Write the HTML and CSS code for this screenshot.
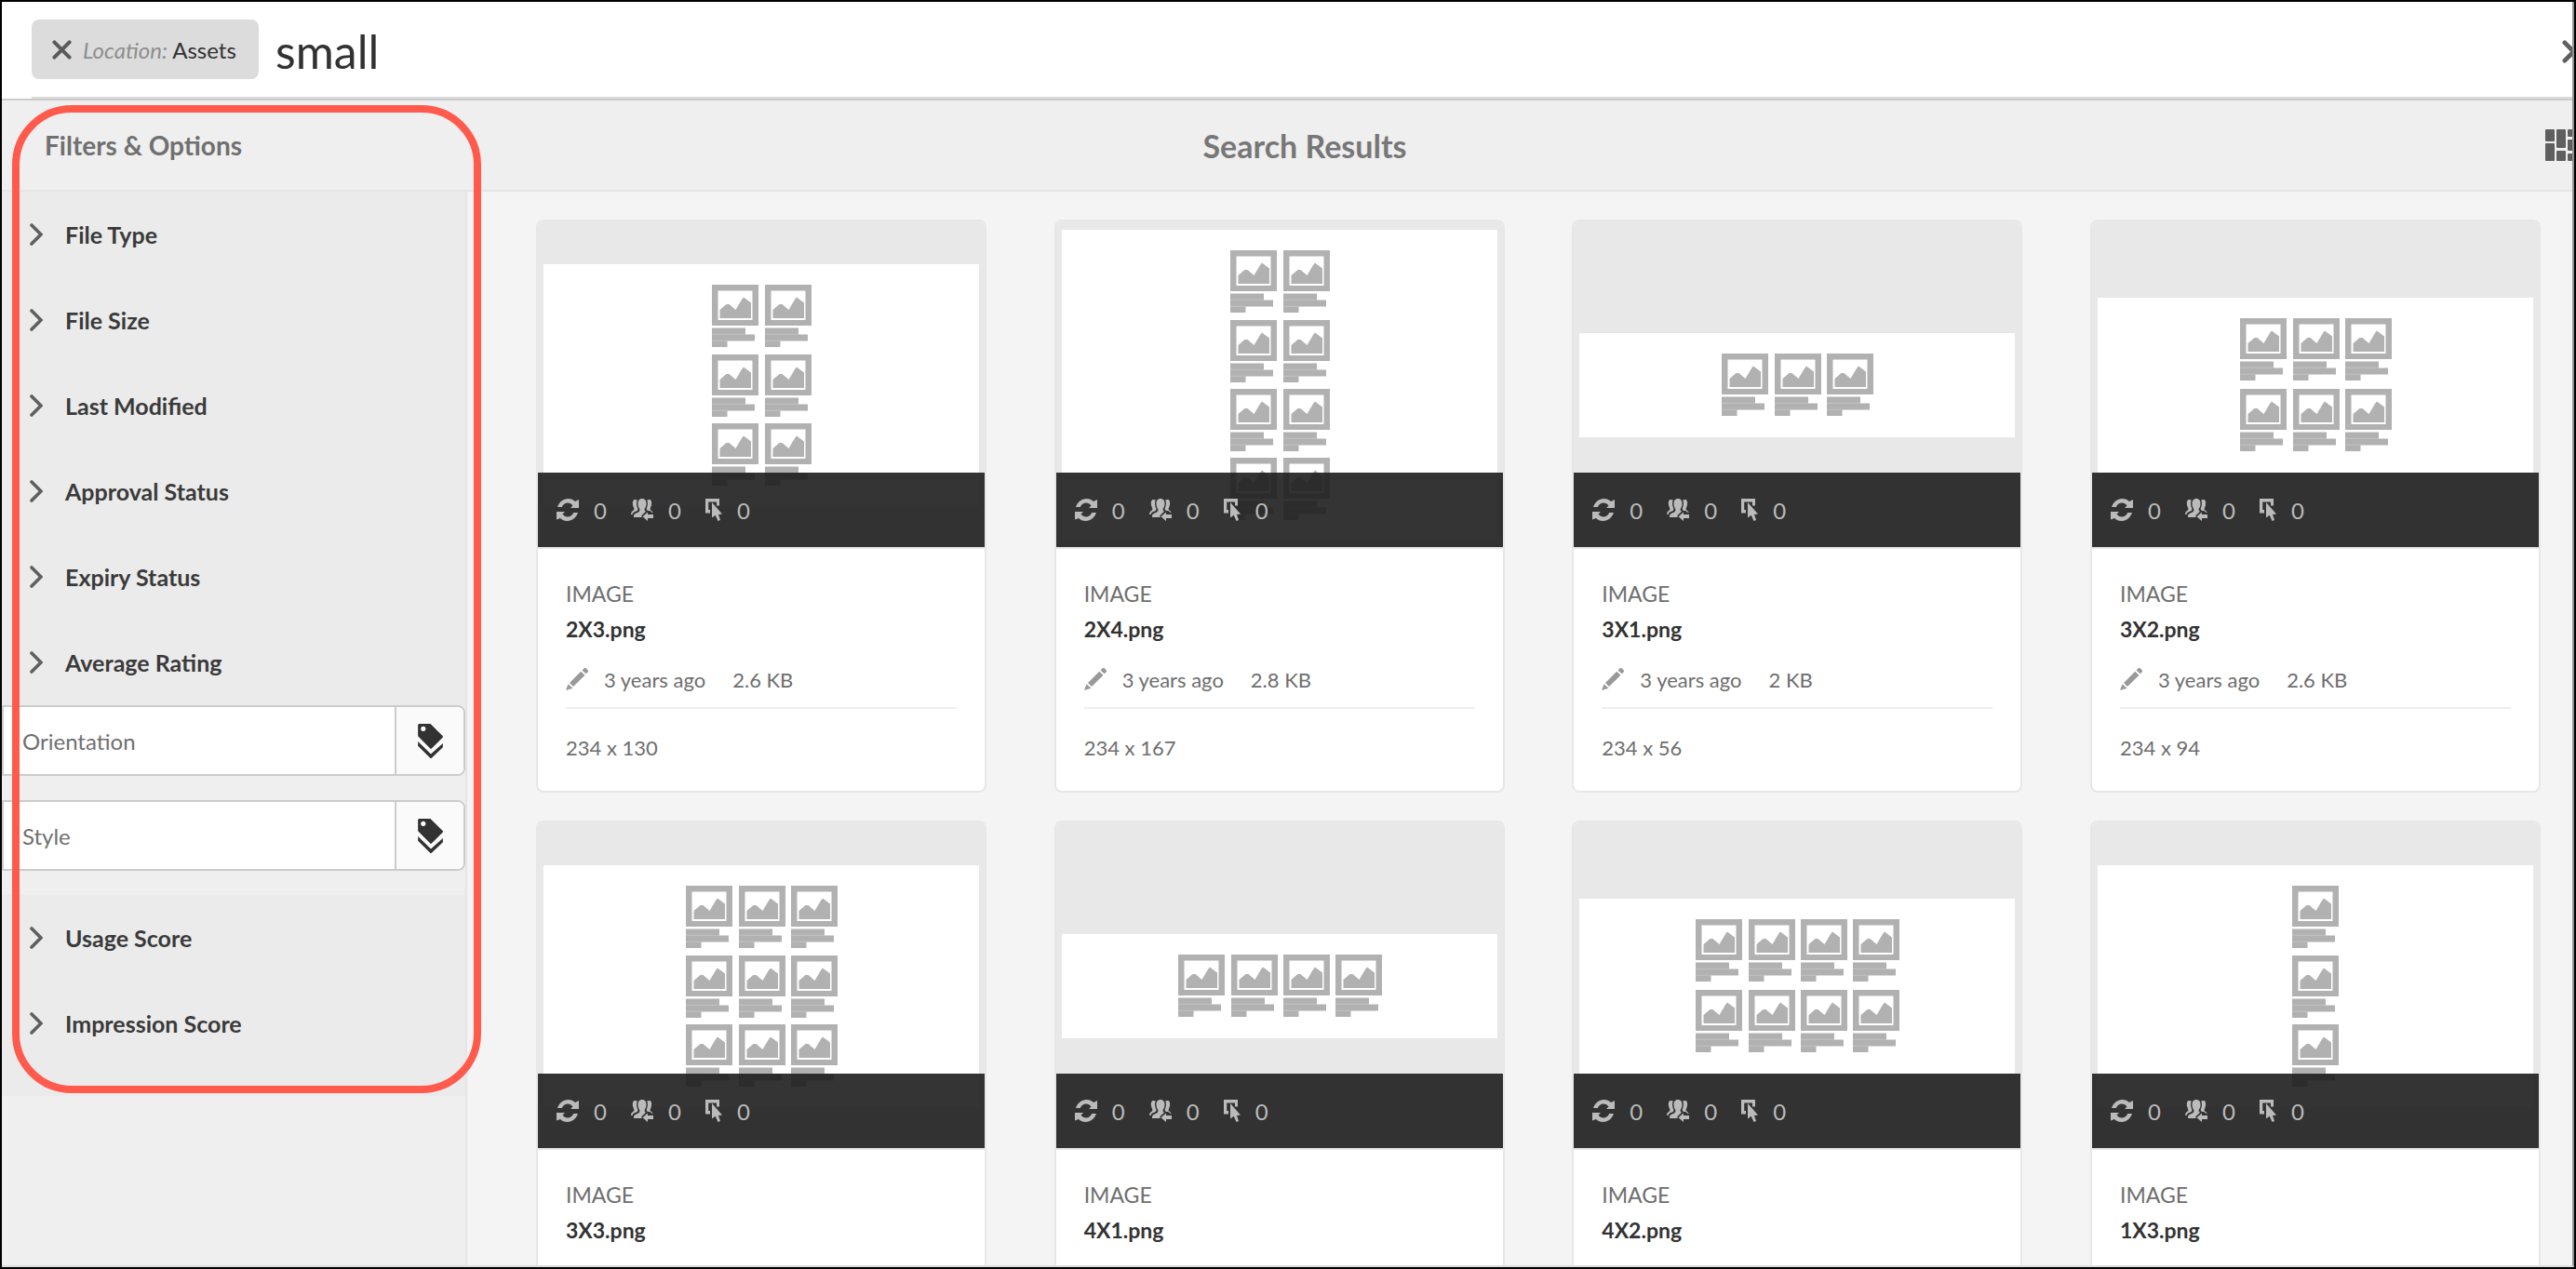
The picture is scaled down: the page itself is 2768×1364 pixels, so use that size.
FILE: index.html
```html
<!DOCTYPE html>
<html lang="en">
<head>
<meta charset="utf-8">
<title>Search Results</title>
<link rel="stylesheet" href="styles.css">
</head>
<body>
<svg class="sprite" aria-hidden="true">
  <defs>
    <symbol id="i-chevron" viewBox="0 0 14 24"><path d="M2 2l10 10L2 22" fill="none" stroke="currentColor" stroke-width="3.6" stroke-linecap="round"/></symbol>
    <symbol id="i-close" viewBox="0 0 26 26"><path d="M3 3l20 20M23 3L3 23" fill="none" stroke="currentColor" stroke-width="5" stroke-linecap="round"/></symbol>
    <symbol id="i-tags" viewBox="0 0 26 36"><path fill="currentColor" fill-rule="evenodd" d="M1 0h12l13 13v1L14 26h-1L0 13V1zM5.500 2.700a2.600 2.600 0 1 0 .01 0zM0 18.500L13.500 31.500 26 20.500v4L14 36h-1L0 23z"/></symbol>
    <symbol id="i-refresh" viewBox="0 0 24 24"><path fill="currentColor" d="M1 9C3 3.500 7 0 12.500 0c3 0 5.500 1.200 7.500 3l4-2v9h-9l2.500-2.500C16 5.500 14.500 4.500 12 4.500c-2.800 0-5 1.700-6.200 4.500zM23 15c-2 5.500-6 9-11.500 9-3 0-5.500-1.200-7.500-3l-4 1.500V14h9l-2.500 2.500c1.500 2 3.200 3 5.500 3 2.800 0 5-1.700 6.200-4.500z"/></symbol>
    <symbol id="i-people" viewBox="0 0 24 24"><path fill="currentColor" d="M12 0c3.200 0 4.500 2.300 4.500 5.500 0 2.500-.8 4-1.800 5.300-.3 1.500.1 2.400 1.300 2.900l-4.500 4.300V20H3v-1.300c0-1.700 1-2.700 3.200-3.500 2-.8 3.300-1.300 3.200-4C8.300 9.800 7.500 8 7.500 5.500 7.500 2.300 8.800 0 12 0zM3.500 1C5 .8 6 1.200 6.800 1.500 5.600 4 5.800 7.500 7.300 10.500 7.700 12.500 7 13 5 13.800 3 14.500 2 15.300 1.500 17H0c0-2.500 1-3.500 3-4.800C4 11.300 3 10 2.300 8 1.600 5.500 1.500 2 3.500 1zM20.500 1c-1.500-.2-2.500.2-3.300.5 1.200 2.500 1 6-.5 9 0 1.300.3 2 1.500 2.500h2l3.300 2.500c0-1.800-1.300-2.500-2.500-3.300-1-.9 0-2.200.7-4.200.7-2.500.8-6-1.200-7zM18 14.500V17h6v4h-6v3l-5.500-4.800z"/></symbol>
    <symbol id="i-click" viewBox="0 0 18 24"><path fill="currentColor" d="M0 0h15v7.500h-3V3.500H3.200v8.500H5v3.500H0zM7 4l11 12.500-4 .5 2 6-2.500 1-2.800-6.300L7 20.500z"/></symbol>
    <symbol id="i-pencil" viewBox="0 0 24 24"><path fill="currentColor" d="M0 24l2.500-6.800 5 4.500zM4 16L16.200 3.800l4.300 4L8 20zM17.500 2.500L20 0h1.500L24 2.800V4l-2.300 2.300z"/></symbol>
    <symbol id="i-masonry" viewBox="0 0 36 34"><g fill="currentColor"><rect width="10" height="13" rx="1"/><rect y="15" width="10" height="19" rx="1"/><rect x="12" width="10" height="20" rx="1"/><rect x="12" y="23" width="10" height="11" rx="1"/><rect x="24" width="10" height="8" rx="1"/><rect x="24" y="11" width="10" height="12" rx="1"/><rect x="24" y="26" width="10" height="8" rx="1"/></g></symbol>

    <g id="tile" fill="#b1b1b1">
      <path fill-rule="evenodd" d="M0 0H50V44H0zM6.500 6.500V38H43.500V6.500z"/>
      <path d="M8.500 27l7-6h3l7 6 6.500-11 2-2.500 8 6V36H8.500z"/>
      <path d="M0 46.500h36v7h10v7H16.500V67H0z"/>
      <path fill="#c4c4c4" d="M0 52.700h36v1H0zM0 59.700h17v1H0z"/>
    </g>
    <g id="row2"><use href="#tile" x="181"/><use href="#tile" x="238"/></g>
    <g id="row3"><use href="#tile" x="153"/><use href="#tile" x="210"/><use href="#tile" x="266"/></g>
    <g id="row4"><use href="#tile" x="125"/><use href="#tile" x="182"/><use href="#tile" x="238"/><use href="#tile" x="294"/></g>
  </defs>
</svg>

<div class="app">
  <header class="search">
    <div class="search-row">
      <button class="chip" type="button"><svg class="chip-icon"><use href="#i-close"/></svg><span><em>Location:</em> Assets</span></button>
      <input class="query" type="text" value="small" aria-label="Search">
      <button class="close" type="button" aria-label="Close search"><svg class="close-icon"><use href="#i-close"/></svg></button>
    </div>
  </header>

  <div class="titlebar">
    <h2 class="rail-title">Filters &amp; Options</h2>
    <h1 class="page-title">Search Results</h1>
    <button class="view" type="button" aria-label="Card view"><svg class="view-icon"><use href="#i-masonry"/></svg></button>
  </div>

  <div class="columns">
    <aside class="rail">
      <div class="group">
        <button class="filter" type="button"><svg class="chevron"><use href="#i-chevron"/></svg>File Type</button>
        <button class="filter" type="button"><svg class="chevron"><use href="#i-chevron"/></svg>File Size</button>
        <button class="filter" type="button"><svg class="chevron"><use href="#i-chevron"/></svg>Last Modified</button>
        <button class="filter" type="button"><svg class="chevron"><use href="#i-chevron"/></svg>Approval Status</button>
        <button class="filter" type="button"><svg class="chevron"><use href="#i-chevron"/></svg>Expiry Status</button>
        <button class="filter" type="button"><svg class="chevron"><use href="#i-chevron"/></svg>Average Rating</button>
      </div>
      <div class="fields">
        <div class="field"><input class="tag-input" type="text" placeholder="Orientation" aria-label="Orientation"><button class="tag-button" type="button" aria-label="Choose orientation"><svg class="tags"><use href="#i-tags"/></svg></button></div>
        <div class="field"><input class="tag-input" type="text" placeholder="Style" aria-label="Style"><button class="tag-button" type="button" aria-label="Choose style"><svg class="tags"><use href="#i-tags"/></svg></button></div>
      </div>
      <div class="group group-last">
        <button class="filter" type="button"><svg class="chevron"><use href="#i-chevron"/></svg>Usage Score</button>
        <button class="filter" type="button"><svg class="chevron"><use href="#i-chevron"/></svg>Impression Score</button>
      </div>
    </aside>

    <main class="results">
      <article class="card">
        <div class="preview">
          <svg class="thumb" viewBox="0 0 468 260"><use href="#row2" y="22"/><use href="#row2" y="97"/><use href="#row2" y="171"/></svg>
          <div class="stats"><svg class="stat"><use href="#i-refresh"/></svg><span>0</span><svg class="stat"><use href="#i-people"/></svg><span>0</span><svg class="stat stat-click"><use href="#i-click"/></svg><span>0</span></div>
        </div>
        <div class="info"><p class="kind">IMAGE</p><h3 class="name">2X3.png</h3><p class="meta"><svg class="pencil"><use href="#i-pencil"/></svg><span class="age">3 years ago</span><span>2.6 KB</span></p><p class="dims">234 x 130</p></div>
      </article>
      <article class="card">
        <div class="preview">
          <svg class="thumb" viewBox="0 0 468 334"><use href="#row2" y="22"/><use href="#row2" y="97"/><use href="#row2" y="171"/><use href="#row2" y="245"/></svg>
          <div class="stats"><svg class="stat"><use href="#i-refresh"/></svg><span>0</span><svg class="stat"><use href="#i-people"/></svg><span>0</span><svg class="stat stat-click"><use href="#i-click"/></svg><span>0</span></div>
        </div>
        <div class="info"><p class="kind">IMAGE</p><h3 class="name">2X4.png</h3><p class="meta"><svg class="pencil"><use href="#i-pencil"/></svg><span class="age">3 years ago</span><span>2.8 KB</span></p><p class="dims">234 x 167</p></div>
      </article>
      <article class="card">
        <div class="preview">
          <svg class="thumb" viewBox="0 0 468 112"><use href="#row3" y="22"/></svg>
          <div class="stats"><svg class="stat"><use href="#i-refresh"/></svg><span>0</span><svg class="stat"><use href="#i-people"/></svg><span>0</span><svg class="stat stat-click"><use href="#i-click"/></svg><span>0</span></div>
        </div>
        <div class="info"><p class="kind">IMAGE</p><h3 class="name">3X1.png</h3><p class="meta"><svg class="pencil"><use href="#i-pencil"/></svg><span class="age">3 years ago</span><span>2 KB</span></p><p class="dims">234 x 56</p></div>
      </article>
      <article class="card">
        <div class="preview">
          <svg class="thumb" viewBox="0 0 468 188"><use href="#row3" y="22"/><use href="#row3" y="98"/></svg>
          <div class="stats"><svg class="stat"><use href="#i-refresh"/></svg><span>0</span><svg class="stat"><use href="#i-people"/></svg><span>0</span><svg class="stat stat-click"><use href="#i-click"/></svg><span>0</span></div>
        </div>
        <div class="info"><p class="kind">IMAGE</p><h3 class="name">3X2.png</h3><p class="meta"><svg class="pencil"><use href="#i-pencil"/></svg><span class="age">3 years ago</span><span>2.6 KB</span></p><p class="dims">234 x 94</p></div>
      </article>
      <article class="card">
        <div class="preview">
          <svg class="thumb" viewBox="0 0 468 260"><use href="#row3" y="22"/><use href="#row3" y="97"/><use href="#row3" y="171"/></svg>
          <div class="stats"><svg class="stat"><use href="#i-refresh"/></svg><span>0</span><svg class="stat"><use href="#i-people"/></svg><span>0</span><svg class="stat stat-click"><use href="#i-click"/></svg><span>0</span></div>
        </div>
        <div class="info"><p class="kind">IMAGE</p><h3 class="name">3X3.png</h3></div>
      </article>
      <article class="card">
        <div class="preview">
          <svg class="thumb" viewBox="0 0 468 112"><use href="#row4" y="22"/></svg>
          <div class="stats"><svg class="stat"><use href="#i-refresh"/></svg><span>0</span><svg class="stat"><use href="#i-people"/></svg><span>0</span><svg class="stat stat-click"><use href="#i-click"/></svg><span>0</span></div>
        </div>
        <div class="info"><p class="kind">IMAGE</p><h3 class="name">4X1.png</h3></div>
      </article>
      <article class="card">
        <div class="preview">
          <svg class="thumb" viewBox="0 0 468 188"><use href="#row4" y="22"/><use href="#row4" y="98"/></svg>
          <div class="stats"><svg class="stat"><use href="#i-refresh"/></svg><span>0</span><svg class="stat"><use href="#i-people"/></svg><span>0</span><svg class="stat stat-click"><use href="#i-click"/></svg><span>0</span></div>
        </div>
        <div class="info"><p class="kind">IMAGE</p><h3 class="name">4X2.png</h3></div>
      </article>
      <article class="card">
        <div class="preview">
          <svg class="thumb" viewBox="0 0 468 260"><use href="#tile" x="209" y="22"/><use href="#tile" x="209" y="97"/><use href="#tile" x="209" y="171"/></svg>
          <div class="stats"><svg class="stat"><use href="#i-refresh"/></svg><span>0</span><svg class="stat"><use href="#i-people"/></svg><span>0</span><svg class="stat stat-click"><use href="#i-click"/></svg><span>0</span></div>
        </div>
        <div class="info"><p class="kind">IMAGE</p><h3 class="name">1X3.png</h3></div>
      </article>
    </main>
  </div>
  <div class="callout"></div>
</div>
</body>
</html>
```
FILE: styles.css
```css
* { box-sizing: border-box; }

body {
  margin: 0;
  border: 2px solid #000;
  height: 100vh;
  overflow: hidden;
  font-family: Lato, "Open Sans", sans-serif;
  font-size: 24px;
  color: #323232;
}

button, input { font: inherit; color: inherit; }
button { border: 0; padding: 0; background: none; cursor: pointer; }
h1, h2, h3, p { margin: 0; }
svg { display: block; flex: none; }
.sprite { position: absolute; width: 0; height: 0; }

.app {
  position: relative;
  height: 100%;
  display: flex;
  flex-direction: column;
  border-right: 2px solid #92928e;
  border-bottom: 2px solid #ddd;
  background: #f4f4f4;
  overflow: hidden;
}

/* Search header */
.search {
  flex: none;
  background: #fff;
  border-bottom: 2px solid #cbcbcb;
  padding-left: 32px;
  overflow: hidden;
}
.search-row {
  display: flex;
  align-items: center;
  height: 104px;
  border-bottom: 2px solid #dcdcdc;
}
.chip {
  display: flex;
  align-items: center;
  gap: 12px;
  width: 244px;
  height: 64px;
  padding-left: 22px;
  border-radius: 8px;
  background: #dcdcdc;
  white-space: nowrap;
}
.chip em { color: #8e8e8e; }
.chip-icon { width: 21px; height: 21px; color: #5a5a5a; }
.query {
  flex: 1;
  min-width: 0;
  border: 0;
  outline: 0;
  padding: 4px 0 0 18px;
  background: none;
  font-size: 50px;
  line-height: 56px;
}
.close { margin: 4px -14px 0 0; color: #5f5f5f; }
.close-icon { width: 25px; height: 25px; }

/* Title bar */
.titlebar {
  flex: none;
  display: grid;
  grid-template-columns: 1fr auto 1fr;
  align-items: center;
  height: 98px;
  padding: 0 8px 0 46px;
  background: #efefef;
  border-bottom: 2px solid #e5e5e5;
  color: #777;
}
.rail-title { font-size: 28px; font-weight: 700; color: #707070; }
.page-title { font-size: 34px; font-weight: 700; }
.view { justify-self: end; margin-right: -15px; color: #5f5f5f; }
.view-icon { width: 36px; height: 34px; }

.columns { flex: 1; min-height: 0; display: flex; }

/* Filter rail */
.rail {
  flex: none;
  width: 500px;
  background: #efefef;
  border-right: 2px solid #e5e5e5;
}
.group { background: #ebebeb; }
.group-last { padding-bottom: 32px; }
.filter {
  display: flex;
  align-items: center;
  gap: 24px;
  width: 100%;
  height: 92px;
  padding-left: 30px;
  font-size: 25px;
  font-weight: 700;
  color: #3a3a3a;
}
.chevron { width: 14px; height: 24px; color: #5f5f5f; }
.fields { display: grid; gap: 26px; padding-bottom: 26px; }
.field {
  display: flex;
  height: 76px;
  border: 2px solid #ccc;
  border-radius: 0 8px 8px 0;
  background: #fff;
  overflow: hidden;
}
.tag-input {
  flex: 1;
  min-width: 0;
  border: 0;
  outline: 0;
  padding: 0 20px;
  background: none;
}
.tag-input::placeholder { color: #707070; opacity: 1; }
.tag-button {
  display: grid;
  place-items: center;
  width: 74px;
  border-left: 2px solid #ccc;
  background: #fafafa;
}
.tags { width: 27px; height: 37px; color: #323232; }

/* Result cards */
.results {
  flex: 1;
  min-width: 0;
  display: grid;
  grid-template-columns: repeat(auto-fill, 484px);
  justify-content: space-between;
  align-content: start;
  row-gap: 30px;
  padding: 30px 34px 30px 74px;
  overflow-y: auto;
  scrollbar-width: none;
}
.card {
  min-height: 616px;
  border: 2px solid #e7e7e7;
  border-radius: 8px;
  background: #fff;
  overflow: hidden;
}
.preview {
  position: relative;
  display: grid;
  align-items: center;
  height: 352px;
  padding: 2px 6px 0;
  border-bottom: 2px solid #e5e5e5;
  background: #e8e8e8;
}
.thumb { width: 100%; background: #fff; }
.stats {
  position: absolute;
  inset: auto 0 0;
  display: flex;
  align-items: center;
  gap: 16px;
  height: 80px;
  padding-left: 20px;
  background: rgba(30, 30, 30, 0.9);
  color: #bbb;
}
.stats span { width: 14px; margin-right: 10px; }
.stat { width: 24px; height: 24px; }
.stat-click { width: 18px; }
.info { padding: 30px 30px 28px; color: #6e6e6e; font-size: 22px; }
.kind { font-size: 23px; line-height: 36px; }
.name { font-size: 23px; line-height: 40px; font-weight: 700; color: #323232; }
.meta {
  display: flex;
  align-items: center;
  height: 66px;
  padding: 12px 0 8px;
  border-bottom: 2px solid #efefef;
}
.pencil { width: 24px; height: 24px; margin-right: 17px; color: #999; }
.age { margin-right: 29px; }
.dims { padding-top: 24px; line-height: 36px; }

/* Highlight drawn over the filter rail */
.callout {
  position: absolute;
  left: 11px;
  top: 111px;
  width: 504px;
  height: 1062px;
  border: 8px solid #ff5a4c;
  border-radius: 64px;
  pointer-events: none;
}
```
